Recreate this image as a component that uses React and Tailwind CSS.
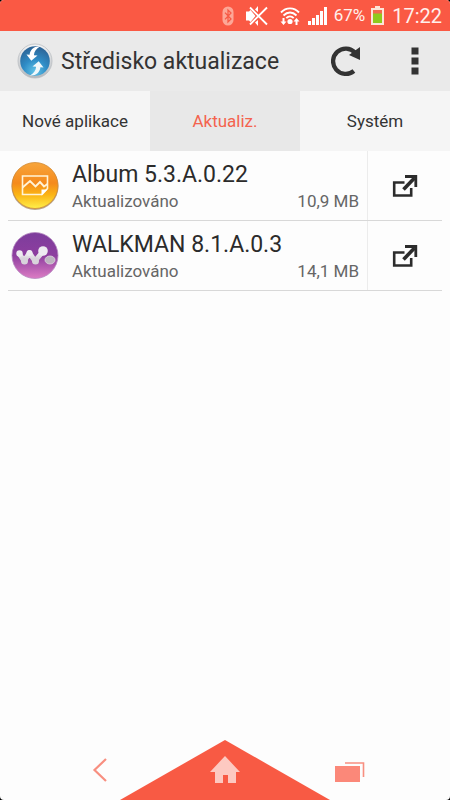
const tabs = [
  { id: 'new', label: 'Nové aplikace' },
  { id: 'updates', label: 'Aktualiz.' },
  { id: 'system', label: 'Systém' },
]

const apps = [
  { name: 'Album 5.3.A.0.22', status: 'Aktualizováno', size: '10,9 MB', Icon: AlbumIcon },
  { name: 'WALKMAN 8.1.A.0.3', status: 'Aktualizováno', size: '14,1 MB', Icon: WalkmanIcon },
]

function BluetoothIcon() {
  return (
    <svg width="12" height="20" viewBox="0 0 12 20">
      <rect x="0.5" y="0.5" width="11" height="19" rx="5.5" fill="#fda797" />
      <path d="M3 6.6 9 13 6 16V4l3 3-6 6.4" fill="none" stroke="#f75a45" strokeWidth="1.3" />
    </svg>
  )
}

function MutedIcon() {
  return (
    <svg width="22" height="22" viewBox="0 0 22 22">
      <path d="M0 6.500h3l1.500-1.500 5 6-5 6L3 15.500H0z" fill="#fff" />
      <path d="M9 4.500 12 1v6zM9 17.500l3 3.500v-6z" fill="#fff" />
      <path d="M4 2.500 21 19.500M21 2.500 4 19.500" stroke="#fff" strokeWidth="1.900" />
    </svg>
  )
}

function WifiIcon() {
  return (
    <svg width="20" height="20" viewBox="0 0 20 20">
      <g fill="none" stroke="#fff" strokeWidth="1.900">
        <path d="M1 6.500C6 1 14 1 19 6.500" />
        <path d="M3.500 9.500c4-4 9-4 13 0" />
        <path d="M6.300 12.200c2.200-2.200 5.200-2.200 7.400 0" />
      </g>
      <circle cx="10" cy="15.500" r="2.600" fill="#fff" />
      <path d="M2.500 12v3.500H0.500L3.500 19l3-3.500h-2V12zM15.500 19v-3.500h-2l3-3.500 3 3.500h-2V19z" fill="#fff" />
    </svg>
  )
}

function SignalIcon() {
  return (
    <svg width="20" height="18" viewBox="0 0 20 18" fill="#fff">
      <path d="M0 14h3v4H0zM4 11h3v7H4zM8 8h3v10H8zM12 4h3v14h-3zM16 0h3v18h-3z" />
    </svg>
  )
}

function BatteryIcon() {
  return (
    <svg width="13" height="19" viewBox="0 0 13 19">
      <path d="M4 0h5v2h4v17H0V2h4z" fill="#fde4d8" />
      <path d="M2 4h9v13H2z" fill="#f26a4d" />
      <path d="M2 7.500h9V17H2z" fill="#8fca1c" />
    </svg>
  )
}

function UpdateCenterIcon() {
  return (
    <svg width="36" height="36" viewBox="0 0 36 36" className="shrink-0">
      <defs>
        <radialGradient id="blue" cx="50%" cy="85%" r="80%">
          <stop offset="0" stopColor="#62c4e8" />
          <stop offset="0.5" stopColor="#2f8cc6" />
          <stop offset="1" stopColor="#2c6699" />
        </radialGradient>
        <linearGradient id="rim" x1="0" y1="0" x2="0" y2="1">
          <stop offset="0" stopColor="#f4f5f6" />
          <stop offset="1" stopColor="#b4b8bd" />
        </linearGradient>
      </defs>
      <circle cx="18" cy="18" r="17" fill="url(#rim)" stroke="#b9bcc0" strokeWidth="0.800" />
      <circle cx="18" cy="18" r="14.800" fill="url(#blue)" />
      <path d="M23 3.600c-5.500-.6-10 2.900-10.400 8.200L9.500 11.500l4.800 6.300 6.200-5.300-3.600-.3C17.200 8.500 19.300 5.500 23 3.600z" fill="#fff" />
      <path d="M13 32.400c5.500.6 10-2.900 10.400-8.200l3.100.3-4.800-6.300-6.200 5.300 3.600.3c-.3 3.700-2.400 6.700-6.100 8.600z" fill="#f1f8fb" />
    </svg>
  )
}

function RefreshIcon() {
  return (
    <svg width="30" height="32" viewBox="0 0 30 32">
      <path d="M22.900 26A12.700 12.700 0 1 1 24 7.500" fill="none" stroke="#333" strokeWidth="4.300" />
      <path d="M29 2v13L18 10z" fill="#333" />
    </svg>
  )
}

function MoreIcon() {
  return (
    <svg width="8" height="28" viewBox="0 0 8 28" fill="#333">
      <path d="M0.500 0.500h7v7h-7zM0.500 10.500h7v7h-7zM0.500 20.500h7v7h-7z" />
    </svg>
  )
}

function AlbumIcon() {
  return (
    <svg width="50" height="50" viewBox="0 0 50 50" className="shrink-0">
      <defs>
        <linearGradient id="orange" x1="0" y1="0" x2="0" y2="1">
          <stop offset="0" stopColor="#f7a53c" />
          <stop offset="0.450" stopColor="#f58a1c" />
          <stop offset="0.700" stopColor="#fbb414" />
          <stop offset="1" stopColor="#fff04a" />
        </linearGradient>
      </defs>
      <circle cx="25" cy="25.500" r="23.500" fill="#b9a68d" />
      <circle cx="25" cy="24.500" r="23" fill="url(#orange)" stroke="#d28a35" strokeWidth="0.800" />
      <path d="M12.500 15h25v12.500L32 33.500H12.500z" fill="none" stroke="#fff3d6" strokeWidth="1.600" />
      <path d="M12.500 26.500 20 20l5.500 5.500 4.500-4.500 4 4.500 3.500-2.500" fill="none" stroke="#fff3d6" strokeWidth="1.900" />
      <path d="M31.500 28.500h6l-6 6z" fill="#fff" />
    </svg>
  )
}

function WalkmanIcon() {
  return (
    <svg width="50" height="50" viewBox="0 0 50 50" className="shrink-0">
      <defs>
        <linearGradient id="purple" x1="0" y1="0" x2="0" y2="1">
          <stop offset="0" stopColor="#7d3d9c" />
          <stop offset="0.500" stopColor="#8d3e9f" />
          <stop offset="1" stopColor="#dc7cc4" />
        </linearGradient>
        <linearGradient id="silver" x1="0" y1="0" x2="0" y2="1">
          <stop offset="0" stopColor="#f2f0f4" />
          <stop offset="1" stopColor="#cfcad2" />
        </linearGradient>
      </defs>
      <circle cx="25" cy="24.500" r="23" fill="url(#purple)" stroke="#b58ac0" strokeWidth="0.800" />
      <path d="M9.500 23 14 30l5.500-8 5.500 8 7.500-9" fill="none" stroke="url(#silver)" strokeWidth="5" strokeLinecap="round" strokeLinejoin="round" />
      <g fill="#eeebf1">
        <circle cx="9.500" cy="22.500" r="3.200" />
        <circle cx="19.500" cy="22" r="3" />
        <circle cx="33" cy="20" r="4.800" />
      </g>
      <g fill="#d8d3db">
        <circle cx="14.500" cy="30" r="3.500" />
        <circle cx="25.500" cy="30" r="3.500" />
      </g>
      <ellipse cx="40" cy="29" rx="5" ry="4" fill="#bdb4c0" stroke="#ddd6e0" strokeWidth="0.800" />
    </svg>
  )
}

function OpenIcon() {
  return (
    <svg width="26" height="24" viewBox="0 0 26 24" fill="none" stroke="#2c2c2c">
      <path d="M12.500 8.500H2.200v13h17v-7.500" strokeWidth="2.600" />
      <path d="M11.500 15.500 22.500 4" strokeWidth="3.600" />
      <path d="M13 2.500h10.800V13" strokeWidth="2.800" />
    </svg>
  )
}

function StatusBar() {
  return (
    <div className="flex h-[31px] items-center justify-end bg-[#fa5944] pr-2 text-white">
      <div className="flex items-center gap-3">
        <BluetoothIcon />
        <MutedIcon />
        <WifiIcon />
      </div>
      <div className="ml-2 flex items-center gap-1.5">
        <SignalIcon />
        <span className="text-[17px] text-[#fff0ec]">67%</span>
        <BatteryIcon />
      </div>
      <span className="ml-2 text-xl text-[#fff0ec]">17:22</span>
    </div>
  )
}

function AppRow({ app }) {
  const { Icon } = app

  return (
    <li className="flex h-[70px] border-b border-[#d8d8d8]">
      <div className="flex min-w-0 flex-1 items-center gap-3 border-r border-[#ececec] pr-2 pl-0.5">
        <Icon />
        <div className="min-w-0 flex-1 pt-0.5">
          <h2 className="truncate text-[23px] leading-7 text-[#2b2b2b]">{app.name}</h2>
          <div className="flex justify-between text-[17px] leading-6 text-[#666]">
            <span>{app.status}</span>
            <span>{app.size}</span>
          </div>
        </div>
      </div>
      <button type="button" aria-label="Otevřít" className="flex w-[74px] items-center justify-center">
        <OpenIcon />
      </button>
    </li>
  )
}

function NavBar() {
  return (
    <nav className="relative grid h-[60px] grid-cols-[1fr_50px_1fr]">
      <svg width="210" height="60" viewBox="0 0 210 60" className="absolute bottom-0 left-1/2 -translate-x-1/2">
        <path d="M105 0 210 60H0z" fill="#f85a44" />
      </svg>
      <button type="button" aria-label="Zpět" className="flex items-center justify-center">
        <svg width="16" height="26" viewBox="0 0 16 26">
          <path d="M14 2 2.500 13 14 24" fill="none" stroke="#f88f80" strokeWidth="2.200" />
        </svg>
      </button>
      <button type="button" aria-label="Domů" className="relative flex items-center justify-center">
        <svg width="30" height="28" viewBox="0 0 30 28" fill="#fdc9c1">
          <path d="M15 0 30 16h-4v11h-8v-8h-5v8H5V16H0z" />
        </svg>
      </button>
      <button type="button" aria-label="Poslední aplikace" className="flex items-center justify-center pt-1">
        <svg width="30" height="20" viewBox="0 0 30 20">
          <path d="M0 4h25v16H0z" fill="#fb8879" />
          <path d="M10 1h18.500v14" fill="none" stroke="#f88f80" strokeWidth="1.600" />
        </svg>
      </button>
    </nav>
  )
}

export default function App() {
  return (
    <div className="min-h-screen bg-black font-['Roboto',sans-serif]">
      <div className="flex min-h-screen flex-col overflow-hidden rounded bg-[#fdfdfd]">
        <StatusBar />

        <header className="flex h-[60px] items-center bg-[#eaeaea] pr-[31px] pl-[17px]">
          <UpdateCenterIcon />
          <h1 className="ml-2 flex-1 truncate pt-0.5 text-[23px] text-[#333]">Středisko aktualizace</h1>
          <button type="button" aria-label="Obnovit">
            <RefreshIcon />
          </button>
          <button type="button" aria-label="Další možnosti" className="ml-[50px]">
            <MoreIcon />
          </button>
        </header>

        <div role="tablist" className="grid h-[60px] grid-cols-3 text-[17px]">
          {tabs.map((tab) => {
            const active = tab.id === 'updates'
            return (
              <button
                key={tab.id}
                type="button"
                role="tab"
                aria-selected={active}
                className={active ? 'bg-[#e8e8e8] pt-0.5 text-[#f4634e]' : 'bg-[#f5f5f5] pt-0.5 text-[#333]'}
              >
                {tab.label}
              </button>
            )
          })}
        </div>

        <main className="flex-1 px-2">
          <ul>
            {apps.map((app) => (
              <AppRow key={app.name} app={app} />
            ))}
          </ul>
        </main>

        <NavBar />
      </div>
    </div>
  )
}
